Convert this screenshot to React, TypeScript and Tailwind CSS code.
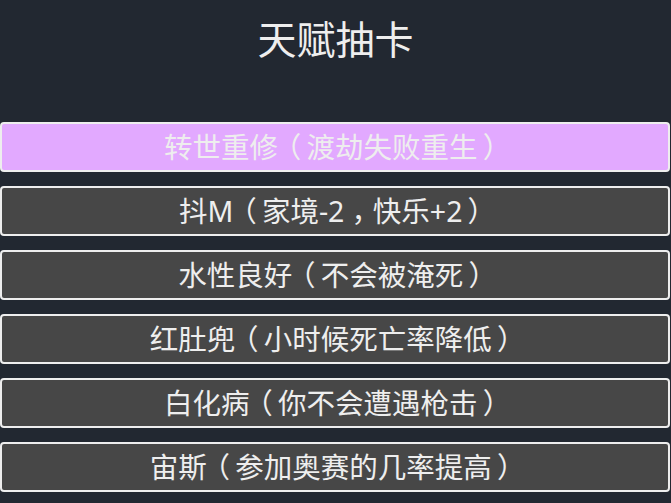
const items = [
  "转世重修（渡劫失败重生）",
  "抖M（家境-2，快乐+2）",
  "水性良好（不会被淹死）",
  "红肚兜（小时候死亡率降低）",
  "白化病（你不会遭遇枪击）",
  "宙斯（参加奥赛的几率提高）",
];

// the original centres fullwidth punctuation in its em box
const punct: Record<string, string> = {
  "（": "pl-[4px]",
  "）": "pr-[4px]",
  "，": "",
};

function Label({ text }: { text: string }) {
  const parts: React.ReactNode[] = [];
  let buf = "";
  [...text].forEach((ch, i) => {
    if (ch in punct) {
      if (buf) parts.push(buf);
      buf = "";
      parts.push(
        <span
          key={i}
          className={`inline-block w-[1em] text-center [font-feature-settings:'halt'] ${punct[ch]}`}
        >
          {ch}
        </span>
      );
    } else {
      buf += ch;
    }
  });
  if (buf) parts.push(buf);
  return <span>{parts}</span>;
}

export default function App() {
  return (
    <div
      className="min-h-screen bg-[#222831] text-[#eeeeee]"
      style={{ fontFamily: '"Noto Sans", "Noto Sans CJK SC", sans-serif' }}
    >
      <h1 className="pt-[11px] text-center text-[39px] leading-[56px]">天赋抽卡</h1>
      <ul className="mt-[55px] flex flex-col gap-[14px] pr-[1px]">
        {items.map((t, i) => (
          <li
            key={t}
            className={`h-[50px] rounded-[4px] border-2 border-[#eeeeee] flex items-center justify-center text-[28.5px] ${
              i === 0 ? "bg-[#e2a9ff]" : "bg-[#474747]"
            }`}
          >
            <Label text={t} />
          </li>
        ))}
      </ul>
    </div>
  );
}
